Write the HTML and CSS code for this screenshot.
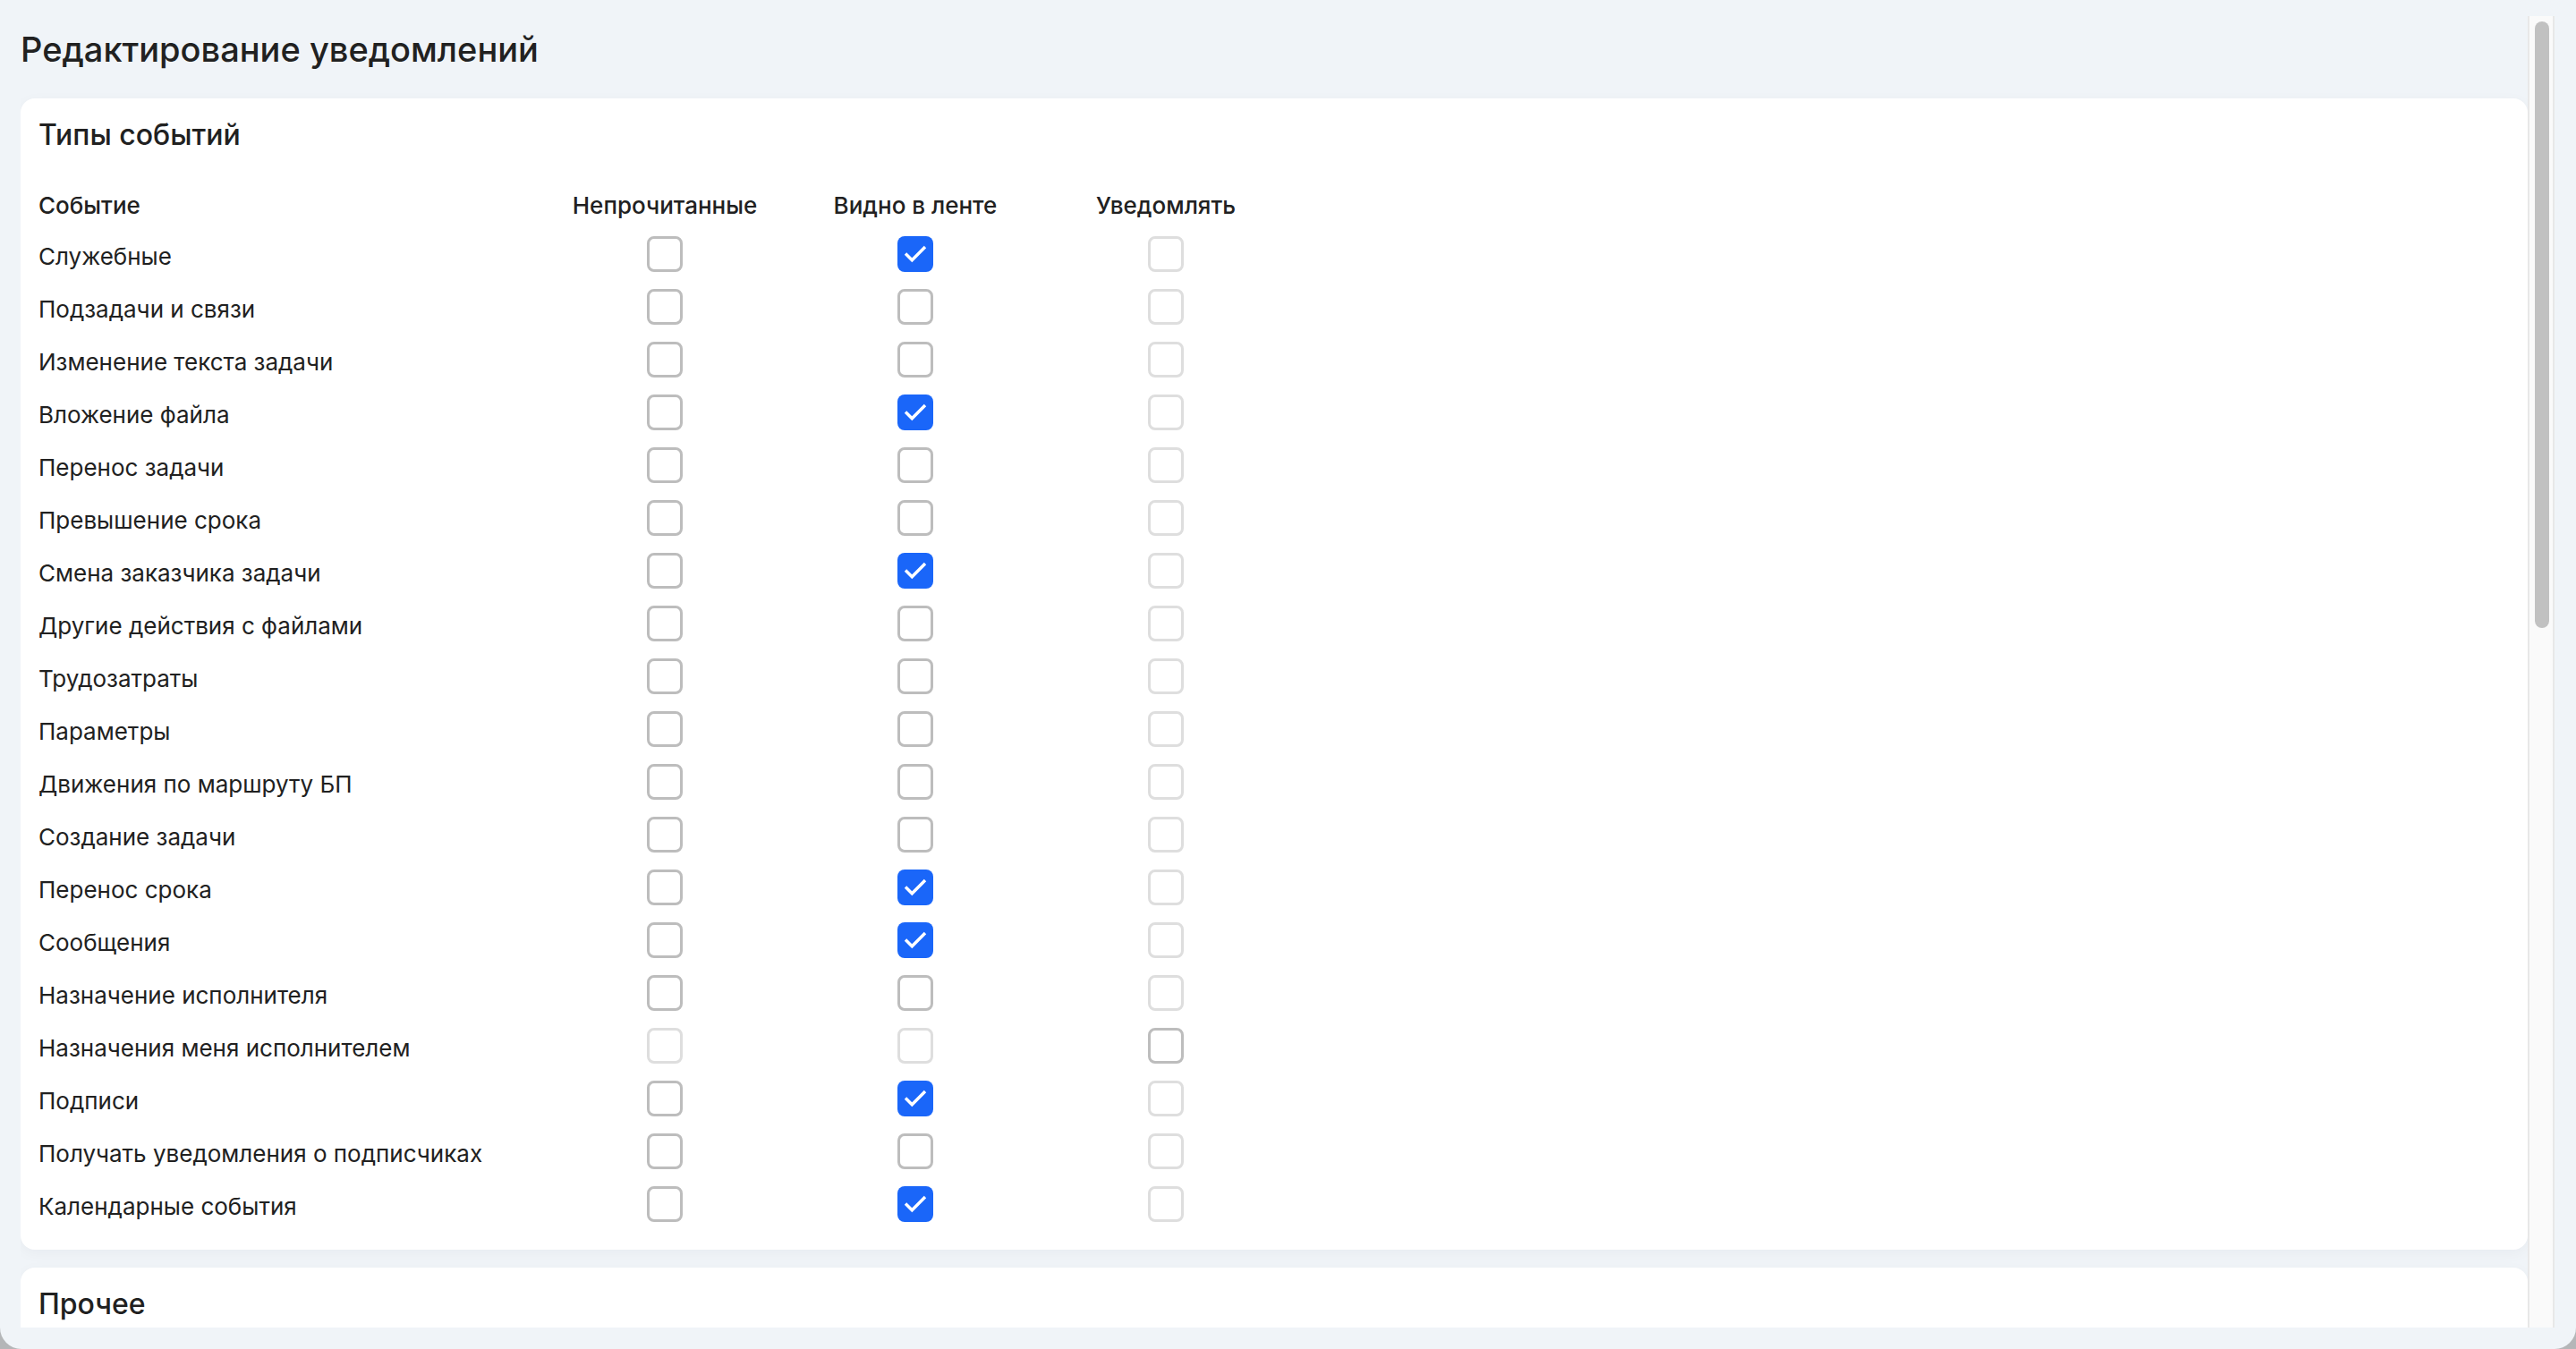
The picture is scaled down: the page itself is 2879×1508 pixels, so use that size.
FILE: index.html
```html
<!DOCTYPE html>
<html lang="ru">
<head>
  <meta charset="UTF-8">
  <title>Редактирование уведомлений</title>
  <link rel="stylesheet" href="styles.css">
</head>
<body>
  <div class="window">
    <main class="content">
      <h1>Редактирование уведомлений</h1>

      <section class="panel">
        <h2>Типы событий</h2>
        <table class="events">
          <thead>
            <tr>
              <th scope="col" class="name">Событие</th>
              <th scope="col" id="unread">Непрочитанные</th>
              <th scope="col" id="feed">Видно в ленте</th>
              <th scope="col" id="notify">Уведомлять</th>
              <td></td>
            </tr>
          </thead>
          <tbody id="eventRows"></tbody>
        </table>
      </section>

      <section class="panel">
        <h2>Прочее</h2>
      </section>
    </main>
    <div class="scrollbar"><div class="thumb"></div></div>
  </div>

  <script>
    const columns = ['unread', 'feed', 'notify'];

    // on - видно в ленте, only - доступно только уведомление
    const events = [
      { name: 'Служебные', on: true },
      { name: 'Подзадачи и связи' },
      { name: 'Изменение текста задачи' },
      { name: 'Вложение файла', on: true },
      { name: 'Перенос задачи' },
      { name: 'Превышение срока' },
      { name: 'Смена заказчика задачи', on: true },
      { name: 'Другие действия с файлами' },
      { name: 'Трудозатраты' },
      { name: 'Параметры' },
      { name: 'Движения по маршруту БП' },
      { name: 'Создание задачи' },
      { name: 'Перенос срока', on: true },
      { name: 'Сообщения', on: true },
      { name: 'Назначение исполнителя' },
      { name: 'Назначения меня исполнителем', only: true },
      { name: 'Подписи', on: true },
      { name: 'Получать уведомления о подписчиках' },
      { name: 'Календарные события', on: true }
    ];

    const tbody = document.getElementById('eventRows');

    events.forEach((event, i) => {
      const row = tbody.insertRow();
      const name = document.createElement('th');
      name.scope = 'row';
      name.id = 'event' + i;
      name.className = 'name';
      name.textContent = event.name;
      row.appendChild(name);

      columns.forEach(column => {
        const input = document.createElement('input');
        input.type = 'checkbox';
        input.checked = column === 'feed' && !!event.on;
        input.disabled = event.only ? column !== 'notify' : column === 'notify';
        input.setAttribute('aria-labelledby', name.id + ' ' + column);
        row.insertCell().appendChild(input);
      });
      row.insertCell();
    });
  </script>
</body>
</html>
```
FILE: styles.css
```css
* {
  box-sizing: border-box;
}

body {
  margin: 0;
  background-color: #b4b6b8;
  color: #212121;
  font-family: Inter, "Liberation Sans", sans-serif;
  font-size: 26px;
  line-height: 32px;
}

.window {
  display: flex;
  height: 100vh;
  padding: 18px 24px 24px 23px;
  border-radius: 0 0 24px 24px;
  background-color: #f0f4f8;
  overflow: hidden;
}

.content {
  flex: 1;
  overflow: hidden;
}

h1 {
  margin: 12px 0 30px;
  font-size: 38px;
  line-height: 50px;
  font-weight: 500;
}

.panel {
  min-height: 200px;
  margin-bottom: 20px;
  padding: 20px 20px 22px;
  border-radius: 16px;
  background-color: white;
  box-shadow: 0 4px 16px rgba(0, 30, 60, 0.04);
}

h2 {
  margin: 0 0 36px;
  font-size: 32px;
  line-height: 42px;
  font-weight: 500;
}

.events {
  width: 100%;
  table-layout: fixed;
  border-collapse: collapse;
}

.events th,
.events td {
  width: 280px;
  height: 59px;
  padding: 0;
  text-align: center;
}

.events thead th {
  height: 46px;
  padding: 6px 0 8px;
  font-weight: 500;
}

.events thead td {
  width: auto;
  height: 46px;
}

.events .name {
  width: 560px;
  text-align: left;
}

.events tbody .name {
  padding-top: 6px;
  font-weight: 400;
}

input[type="checkbox"] {
  appearance: none;
  display: block;
  width: 40px;
  height: 40px;
  margin: 0 auto;
  border: 3px solid #bdbdbd;
  border-radius: 8px;
  background-color: white;
}

input[type="checkbox"]:checked {
  border: none;
  background: #1a66f9 url("data:image/svg+xml,%3Csvg xmlns='http://www.w3.org/2000/svg' viewBox='0 0 40 40'%3E%3Cpath d='M9 19.500L16.300 26.800L31 12' fill='none' stroke='white' stroke-width='3.400'/%3E%3C/svg%3E") center / 40px 40px no-repeat;
}

input[type="checkbox"]:disabled {
  border-color: #dedede;
}

.scrollbar {
  width: 30px;
  padding: 6px;
  border: solid #e8e8e8;
  border-width: 0 2px;
  background-color: #fafafa;
}

.thumb {
  width: 16px;
  height: 46.6%;
  border-radius: 8px;
  background-color: #c1c1c1;
}
```
